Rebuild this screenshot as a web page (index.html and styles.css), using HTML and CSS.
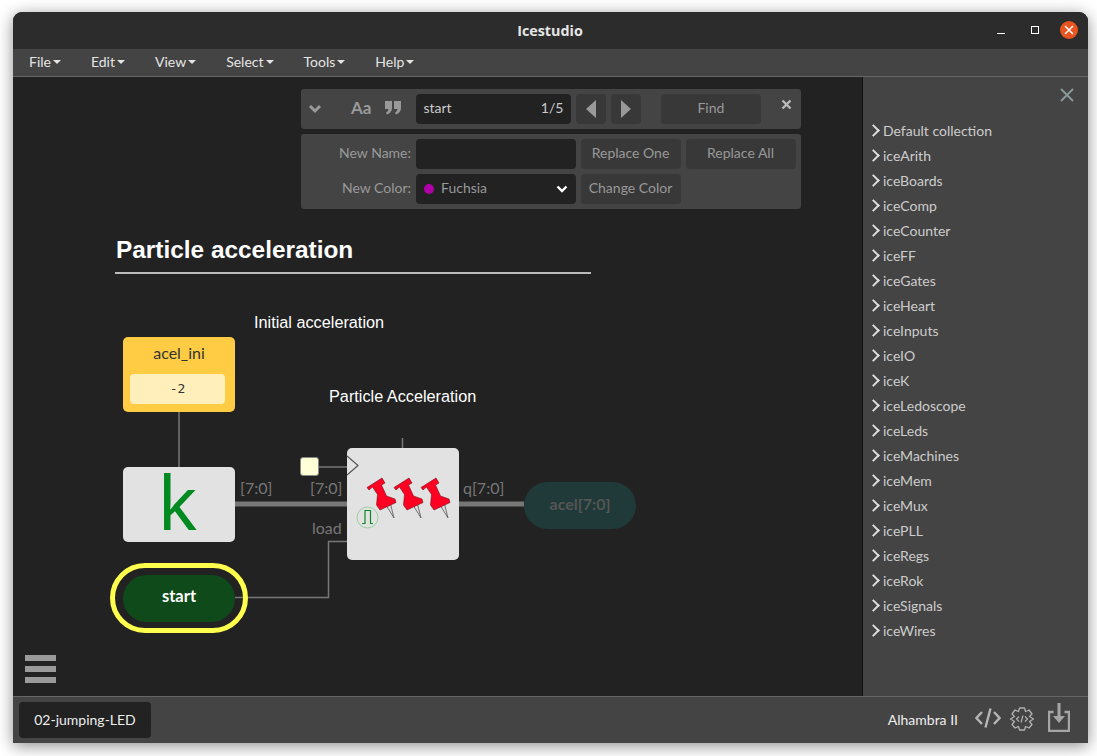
FILE: index.html
```html
<!DOCTYPE html>
<html lang="en">
<head>
  <meta charset="UTF-8" />
  <title>Icestudio</title>
  <link rel="stylesheet" href="styles.css">
</head>
<body>
  <svg class="defs" width="0" height="0">
    <symbol id="pin" viewBox="0 0 32 42">
      <polygon class="pin-tip" points="21,28 25.5,27 29,41"/>
      <path class="pin-body" d="M2 10.5 L17 1 L20 6 L16.5 8 L21.5 19 L30 22 L31 25.5 L15 33 L11.5 28 L12.5 17.5 L7.5 10 L4 13 Z"/>
    </symbol>
  </svg>

  <div class="window">
    <div class="titlebar">
      <span class="app-title">Icestudio</span>
      <div class="win-buttons">
        <span class="win-min"></span>
        <span class="win-max"></span>
        <span class="win-close">
          <svg width="10" height="10" viewBox="0 0 10 10"><path d="M1 1 L9 9 M9 1 L1 9" stroke="#fff" stroke-width="1.5"/></svg>
        </span>
      </div>
    </div>

    <div class="menubar">
      <span class="menu-item">File</span>
      <span class="menu-item">Edit</span>
      <span class="menu-item">View</span>
      <span class="menu-item">Select</span>
      <span class="menu-item">Tools</span>
      <span class="menu-item">Help</span>
    </div>

    <div class="main">
      <div class="canvas">
        <svg class="wires" width="849" height="619" viewBox="13 77 849 619">
          <path class="wire" d="M179 412 V467"/>
          <path class="wire" d="M402.5 438 V448"/>
          <path class="wire" d="M319 467 H350"/>
          <path class="wire" d="M235 597.5 H328.5 V541.5 H347"/>
          <path class="bus" d="M235 504 H347"/>
          <path class="bus" d="M459 504 H524"/>
        </svg>

        <div class="title-block">Particle acceleration</div>
        <div class="note note-initial">Initial acceleration</div>
        <div class="note note-particle">Particle Acceleration</div>

        <div class="node constant">
          <div class="constant-name">acel_ini</div>
          <div class="constant-value">-2</div>
        </div>
        <div class="node k-block">k</div>
        <div class="node start-ring"></div>
        <div class="node start-pin">start</div>
        <div class="node clock-pin"></div>

        <div class="node pins-block">
          <svg class="clk-arrow" width="12" height="22" viewBox="0 0 12 22"><path d="M0 1 L11 10.5 L0 20" fill="#e2e2e2" stroke="#555" stroke-width="1.2"/></svg>
          <svg class="pin pin-a"><use href="#pin"/></svg>
          <svg class="pin pin-b"><use href="#pin"/></svg>
          <svg class="pin pin-c"><use href="#pin"/></svg>
          <svg class="pulse" width="23" height="23" viewBox="0 0 23 23">
            <circle cx="11.5" cy="11.5" r="10.5" fill="none" stroke="#9ccf9f" stroke-width="1"/>
            <path d="M6 17.5 H9 V4.5 H14.5 V17.5 H17" fill="none" stroke="#0a8a2a" stroke-width="1.2"/>
          </svg>
        </div>

        <div class="node output-pin">acel[7:0]</div>

        <span class="wire-label label-bus-a">[7:0]</span>
        <span class="wire-label label-bus-b">[7:0]</span>
        <span class="wire-label label-load">load</span>
        <span class="wire-label label-q">q[7:0]</span>

        <div class="hamburger"><span></span><span></span><span></span></div>

        <div class="search-box">
          <div class="search-panel">
            <svg class="tool-icon chevron" width="14" height="10" viewBox="0 0 14 10"><path d="M2 2 L7 7 L12 2" fill="none" stroke="#999" stroke-width="3"/></svg>
            <span class="case-icon">Aa</span>
            <svg class="tool-icon quote" width="16" height="14" viewBox="0 0 16 14">
              <path d="M0 0 H7 V7 C7 10 5 12.5 2 13.5 L1 11.5 C2.6 10.8 3.4 9.6 3.4 8 H0 Z M9 0 H16 V7 C16 10 14 12.5 11 13.5 L10 11.5 C11.6 10.8 12.4 9.6 12.4 8 H9 Z" fill="#999"/>
            </svg>
            <div class="search-input"><span>start</span><span>1/5</span></div>
            <button class="btn btn-arrow"><svg width="10" height="18" viewBox="0 0 10 18"><polygon points="10,0 10,18 0,9" fill="#999"/></svg></button>
            <button class="btn btn-arrow"><svg width="10" height="18" viewBox="0 0 10 18"><polygon points="0,0 0,18 10,9" fill="#999"/></svg></button>
            <button class="btn btn-find">Find</button>
            <svg class="panel-close" width="11" height="11" viewBox="0 0 11 11"><path d="M1.5 1.5 L9.5 9.5 M9.5 1.5 L1.5 9.5" stroke="#bbb" stroke-width="2.4"/></svg>
          </div>
          <div class="replace-panel">
            <label class="field-label">New Name:</label>
            <div class="field"></div>
            <button class="btn">Replace One</button>
            <button class="btn">Replace All</button>
            <label class="field-label">New Color:</label>
            <div class="field field-select">
              <span class="dot"></span>
              <span class="select-text">Fuchsia</span>
              <svg width="12" height="8" viewBox="0 0 12 8"><path d="M1.5 1.5 L6 6 L10.5 1.5" fill="none" stroke="#fff" stroke-width="2.4"/></svg>
            </div>
            <button class="btn">Change Color</button>
          </div>
        </div>
      </div>

      <div class="sidebar">
        <svg class="sidebar-close" width="14" height="14" viewBox="0 0 14 14"><path d="M1 1 L13 13 M13 1 L1 13" stroke="#8c9a9a" stroke-width="1.8"/></svg>
        <ul class="collections">
          <li>Default collection</li>
          <li>iceArith</li>
          <li>iceBoards</li>
          <li>iceComp</li>
          <li>iceCounter</li>
          <li>iceFF</li>
          <li>iceGates</li>
          <li>iceHeart</li>
          <li>iceInputs</li>
          <li>iceIO</li>
          <li>iceK</li>
          <li>iceLedoscope</li>
          <li>iceLeds</li>
          <li>iceMachines</li>
          <li>iceMem</li>
          <li>iceMux</li>
          <li>icePLL</li>
          <li>iceRegs</li>
          <li>iceRok</li>
          <li>iceSignals</li>
          <li>iceWires</li>
        </ul>
      </div>
    </div>

    <div class="footer">
      <div class="file-tab">02-jumping-LED</div>
      <div class="footer-right">
        <span class="board-name">Alhambra II</span>
        <svg class="icon-code" width="26" height="22" viewBox="0 0 26 22"><path d="M7 5 L1.5 11 L7 17 M19 5 L24.5 11 L19 17 M15.5 1.5 L10.5 20.5" fill="none" stroke="#b5b5b5" stroke-width="2.4"/></svg>
        <svg class="icon-gear" width="26" height="26" viewBox="0 0 26 26">
          <path d="M10.5 2 H15.5 L16.5 5.5 L20 4 L23 8 L20.5 10.5 L24.5 13 L20.5 15.5 L23 18.5 L20 22 L16.5 20.5 L15.5 24 H10.5 L9.5 20.5 L6 22 L3 18.5 L5.5 15.5 L1.5 13 L5.5 10.5 L3 8 L6 4 L9.5 5.5 Z" fill="none" stroke="#b0b0b0" stroke-width="1.3" stroke-linejoin="round"/>
          <path d="M10 10.5 L7.5 13 L10 15.5 M16 10.5 L18.5 13 L16 15.5 M14 9.5 L12 16.5" fill="none" stroke="#b0b0b0" stroke-width="1.2"/>
        </svg>
        <svg class="icon-load" width="22" height="29" viewBox="0 0 22 29">
          <path d="M5.5 9 H1 V28 H21 V9 H16.5" fill="none" stroke="#a5a5a5" stroke-width="2.4"/>
          <path d="M11 0 V18" stroke="#a5a5a5" stroke-width="3"/>
          <path d="M5 13 L11 20 L17 13 Z" fill="#a5a5a5"/>
        </svg>
      </div>
    </div>
  </div>
</body>
</html>
```

FILE: styles.css
```css
* {
  box-sizing: border-box;
}
html, body {
  margin: 0;
  height: 100%;
  overflow: hidden;
}
body {
  background: #fff;
  padding: 12px 9px 13px 13px;
  font-family: Lato, sans-serif;
}
.defs {
  position: absolute;
}
.window {
  width: 1075px;
  height: 731px;
  display: flex;
  flex-direction: column;
  border-radius: 9px 9px 0 0;
  overflow: hidden;
  background: #222;
  box-shadow: 0 3px 16px rgba(0, 0, 0, 0.45);
}

/* title bar */
.titlebar {
  height: 37px;
  flex: none;
  background: #2c2c2c;
  display: flex;
  align-items: center;
  justify-content: center;
  position: relative;
}
.app-title {
  color: #e6e6e6;
  font-family: "Open Sans", sans-serif;
  font-weight: 700;
  font-size: 14.3px;
  margin-left: -1px;
}
.win-buttons {
  position: absolute;
  right: 10px;
  top: 9px;
  display: flex;
  align-items: center;
}
.win-min {
  width: 8px;
  height: 1px;
  margin-top: 6px;
  background: #fff;
}
.win-max {
  width: 8px;
  height: 8px;
  margin-left: 26px;
  border: 1px solid #fff;
}
.win-close {
  width: 18px;
  height: 18px;
  margin-left: 21px;
  border-radius: 50%;
  background: #e95420;
  display: flex;
  align-items: center;
  justify-content: center;
}

/* menu */
.menubar {
  height: 28px;
  flex: none;
  background: #444;
  border-bottom: 1px solid #666;
  display: flex;
  align-items: center;
  padding: 0 0 2px 16px;
  gap: 30px;
}
.menu-item {
  color: #e4e4e4;
  font-size: 14px;
  display: flex;
  align-items: center;
  gap: 2px;
}
.menu-item::after {
  content: "";
  border: 4px solid transparent;
  border-top-color: #e4e4e4;
  border-bottom: 0;
}

/* main */
.main {
  flex: 1;
  display: flex;
  min-height: 0;
}
.canvas {
  width: 849px;
  position: relative;
  background: #222;
}
.sidebar {
  flex: 1;
  background: #444;
  border-left: 1px solid #111;
  position: relative;
  padding-top: 41px;
}
.sidebar-close {
  position: absolute;
  right: 14px;
  top: 11px;
}
.collections {
  list-style: none;
  margin: 0;
  padding: 0 0 0 8px;
}
.collections li {
  height: 25px;
  line-height: 25px;
  color: #ccc;
  font-size: 14px;
  display: flex;
  align-items: center;
  gap: 4px;
}
.collections li::before {
  content: "";
  width: 7px;
  height: 7px;
  border-top: 2px solid #ddd;
  border-right: 2px solid #ddd;
  transform: rotate(45deg);
  margin-left: -2px;
  margin-right: 1px;
}

/* diagram */
.wires {
  position: absolute;
  left: 0;
  top: 0;
}
.wire {
  fill: none;
  stroke: #777;
  stroke-width: 1.5;
}
.bus {
  fill: none;
  stroke: #777;
  stroke-width: 5;
}
.title-block {
  position: absolute;
  left: 102px;
  top: 155px;
  width: 476px;
  height: 42px;
  border-bottom: 2px solid #bbb;
  padding-left: 1px;
  color: #fff;
  font-family: "Liberation Sans", sans-serif;
  font-weight: 700;
  font-size: 24.4px;
  line-height: 36px;
}
.note {
  position: absolute;
  color: #fff;
  font-family: "Liberation Sans", sans-serif;
  font-size: 16.25px;
  line-height: 20px;
}
.note-initial {
  left: 241px;
  top: 235px;
}
.note-particle {
  left: 316px;
  top: 309px;
}
.node {
  position: absolute;
}
.constant {
  left: 110px;
  top: 260px;
  width: 112px;
  height: 75px;
  background: #ffcc44;
  border-radius: 5px;
  color: #333;
  text-align: center;
}
.constant-name {
  font-size: 16px;
  line-height: 32px;
}
.constant-value {
  margin: 5px 10px 0 7px;
  height: 30px;
  line-height: 30px;
  width: 95px;
  background: #fff0bb;
  border-radius: 4px;
  font-family: "DejaVu Sans Mono", monospace;
  font-size: 13px;
}
.k-block {
  left: 110px;
  top: 390px;
  width: 112px;
  height: 75px;
  background: #e2e2e2;
  border-radius: 5px;
  color: #008a20;
  font-family: "Noto Sans", sans-serif;
  font-size: 74px;
  line-height: 70px;
  text-align: center;
  padding-right: 3px;
}
.start-ring {
  left: 97px;
  top: 486px;
  width: 138px;
  height: 70px;
  border: 5px solid #ffff4d;
  border-radius: 35px;
}
.start-pin {
  left: 110px;
  top: 498px;
  width: 112px;
  height: 47px;
  line-height: 43px;
  border-radius: 24px;
  background: #0e4a1a;
  color: #fff;
  font-weight: 700;
  font-size: 16.5px;
  text-align: center;
}
.clock-pin {
  left: 287px;
  top: 380px;
  width: 19px;
  height: 19px;
  background: #ffffd8;
  border: 1px solid #888;
  border-radius: 3px;
}
.pins-block {
  left: 334px;
  top: 371px;
  width: 112px;
  height: 112px;
  background: #e2e2e2;
  border-radius: 5px;
}
.clk-arrow {
  position: absolute;
  left: 0;
  top: 7px;
}
.pin {
  position: absolute;
  top: 29px;
  width: 32px;
  height: 42px;
}
.pin-a {
  left: 18px;
}
.pin-b {
  left: 45px;
}
.pin-c {
  left: 72px;
}
.pin-tip {
  fill: #ddd;
  stroke: #555;
  stroke-width: 0.8;
}
.pin-body {
  fill: #ff0022;
  stroke: #70101a;
  stroke-width: 0.6;
}
.pulse {
  position: absolute;
  left: 9px;
  top: 58px;
}
.output-pin {
  left: 511px;
  top: 405px;
  width: 112px;
  height: 47px;
  line-height: 43px;
  border-radius: 24px;
  background: #1f3a38;
  color: #555;
  font-weight: 700;
  font-size: 16px;
  text-align: center;
}
.wire-label {
  position: absolute;
  color: #777;
  font-size: 16px;
  line-height: 20px;
}
.label-bus-a {
  left: 227px;
  top: 401px;
}
.label-bus-b {
  left: 297px;
  top: 401px;
}
.label-load {
  left: 299px;
  top: 441px;
}
.label-q {
  left: 450px;
  top: 401px;
}
.hamburger {
  position: absolute;
  left: 12px;
  top: 578px;
  display: flex;
  flex-direction: column;
  gap: 5px;
}
.hamburger span {
  width: 31px;
  height: 6px;
  background: #9a9a9a;
}

/* search and replace */
.search-box {
  position: absolute;
  left: 288px;
  top: 12px;
  width: 500px;
  color: #999;
  font-size: 14px;
}
.search-panel {
  position: relative;
  height: 40px;
  background: #444;
  border-radius: 3px;
  display: flex;
  align-items: center;
  padding-left: 7px;
}
.replace-panel {
  margin-top: 5px;
  height: 75px;
  background: #444;
  border-radius: 3px;
  padding: 5px;
  display: grid;
  grid-template-columns: 105px 160px 100px 110px;
  grid-auto-rows: 30px;
  gap: 5px;
}
.case-icon {
  margin-left: 29px;
  margin-bottom: 3px;
  font-size: 17px;
  font-weight: 700;
}
.quote {
  margin-left: 14px;
  margin-bottom: 2px;
}
.search-input {
  margin-left: 15px;
  width: 155px;
  height: 30px;
  background: #222;
  border-radius: 4px;
  color: #ccc;
  padding: 0 8px 3px 7px;
  display: flex;
  align-items: center;
  justify-content: space-between;
}
.btn {
  height: 30px;
  border: none;
  border-radius: 4px;
  background: #383838;
  color: #999;
  font-family: inherit;
  font-size: 14px;
  padding: 0 1px 3px 0;
}
.btn-arrow {
  width: 30px;
  margin-left: 5px;
  padding: 0;
  display: flex;
  align-items: center;
  justify-content: center;
}
.btn-find {
  width: 100px;
  margin-left: 20px;
}
.panel-close {
  position: absolute;
  right: 9px;
  top: 10px;
}
.field-label {
  text-align: right;
  line-height: 28px;
}
.field {
  background: #222;
  border-radius: 4px;
}
.field-select {
  display: flex;
  align-items: center;
  padding: 0 8px;
}
.dot {
  width: 10px;
  height: 10px;
  border-radius: 50%;
  background: #b000a8;
}
.select-text {
  flex: 1;
  margin-left: 7px;
  margin-bottom: 3px;
}

/* footer */
.footer {
  height: 47px;
  flex: none;
  background: #444;
  border-top: 1px solid #666;
  display: flex;
  align-items: center;
  justify-content: space-between;
  padding: 0 18px 1px 6px;
}
.file-tab {
  width: 132px;
  height: 36px;
  line-height: 35px;
  background: #222;
  border-radius: 4px;
  color: #eee;
  font-size: 14px;
  text-align: center;
}
.footer-right {
  display: flex;
  align-items: center;
}
.board-name {
  color: #eee;
  font-size: 14px;
  margin-bottom: 1px;
}
.icon-code {
  margin-left: 17px;
  margin-bottom: 3px;
}
.icon-gear {
  margin-left: 8px;
  margin-bottom: 2px;
}
.icon-load {
  margin-left: 13px;
  margin-bottom: 4px;
}
```
